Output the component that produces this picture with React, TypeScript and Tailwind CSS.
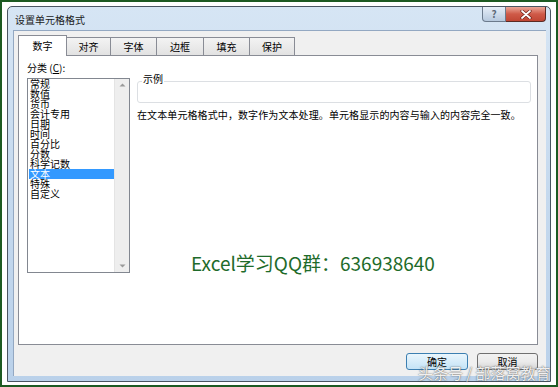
import React from "react";

const font = { fontFamily: '"Noto Sans CJK SC", "Noto Sans", sans-serif' };

const tabs = [
  { label: "数字", w: "w-[49px]", active: true },
  { label: "对齐", w: "w-[45px]" },
  { label: "字体", w: "w-[47px]" },
  { label: "边框", w: "w-[48px]" },
  { label: "填充", w: "w-[47px]" },
  { label: "保护", w: "w-[46px]" },
];

const items = ["常规", "数值", "货币", "会计专用", "日期", "时间", "百分比", "分数", "科学记数", "文本", "特殊", "自定义"];

export default function App() {
  return (
    <div
      className="relative w-[558px] h-[387px] border-2 border-[#1d5a22] bg-white pt-[4px] pl-[5px] overflow-hidden"
      style={font}
    >
      {/* window */}
      <div className="flex flex-col w-[544px] h-[376px] border border-[#4a5562] rounded-t-[5px] bg-gradient-to-b from-[#d6e5f4] via-[#c5d9ee] to-[#bad1ea]">
        {/* title bar */}
        <div className="flex justify-between h-[23px] shrink-0">
          <span className="pl-[7px] pt-[7px] text-[10px] leading-[12px] text-[#1a1a1a]">设置单元格格式</span>
          <div className="flex pr-[4px] items-start">
            <div className="w-[24px] h-[15px] border border-[#6b7a8c] border-t-0 rounded-bl-[4px] bg-gradient-to-b from-[#e6eef8] to-[#b7c9de] flex items-center justify-center">
              <span className="text-[10px] leading-[10px] font-bold text-[#5d6a78]">?</span>
            </div>
            <div className="w-[40px] h-[15px] border border-[#5a2a24] border-t-0 border-l-0 rounded-br-[4px] bg-gradient-to-b from-[#e9a699] via-[#cf5a48] to-[#c04634] flex items-center justify-center">
              <svg width="12" height="9" viewBox="0 0 12 9">
                <path d="M2 1 L10 8 M10 1 L2 8" stroke="#6b2018" strokeWidth="3.2" strokeLinecap="round" />
                <path d="M2 1 L10 8 M10 1 L2 8" stroke="#ffffff" strokeWidth="1.8" strokeLinecap="round" />
              </svg>
            </div>
          </div>
        </div>
        {/* client */}
        <div className="pl-[5px] pr-[4px] pb-[5px]">
          <div className="w-[533px] h-[346px] bg-[#f0f0f0] border-l border-t border-[#93a8c2] flex flex-col pl-[4px] pt-[4px]">
            {/* tabs */}
            <div className="flex items-end h-[20px]">
              {tabs.map((t) =>
                t.active ? (
                  <div
                    key={t.label}
                    className={`${t.w} h-[21px] -mb-px relative z-10 bg-white border border-b-0 border-[#898c95] flex items-center justify-center text-[10px] leading-[12px] text-black`}
                  >
                    {t.label}
                  </div>
                ) : (
                  <div
                    key={t.label}
                    className={`${t.w} h-[18px] -ml-px border border-b-0 border-[#898c95] bg-gradient-to-b from-[#f3f3f3] to-[#e2e2e2] flex items-center justify-center text-[10px] leading-[12px] text-black`}
                  >
                    {t.label}
                  </div>
                )
              )}
            </div>
            {/* panel */}
            <div className="w-[520px] h-[290px] bg-white border border-[#898c95] flex items-start">
              {/* left column */}
              <div className="flex flex-col pl-[8px] pt-[6px]">
                <span className="text-[10px] leading-[12px] text-black">
                  分类 (<span className="underline">C</span>):
                </span>
                <div className="mt-[4px] w-[103px] h-[195px] border border-[#828790] flex">
                  <div className="flex-1 flex flex-col pl-[1px]">
                    {items.map((it) => (
                      <div
                        key={it}
                        className={`h-[10px] text-[10px] leading-[10px] pl-[1px] whitespace-nowrap ${
                          it === "文本" ? "bg-[#3399ff] text-white" : "text-black"
                        }`}
                      >
                        {it}
                      </div>
                    ))}
                  </div>
                  <div className="w-[15px] h-full bg-[#eeeeee] border-l border-[#e4e4e4] flex flex-col items-center justify-between py-[4px]">
                    <svg width="7" height="4" viewBox="0 0 7 4">
                      <path d="M0.5 3.5 L3.5 0.5 L6.5 3.5 Z" fill="#9a9a9a" />
                    </svg>
                    <svg width="7" height="4" viewBox="0 0 7 4">
                      <path d="M0.5 0.5 L3.5 3.5 L6.5 0.5 Z" fill="#9a9a9a" />
                    </svg>
                  </div>
                </div>
              </div>
              {/* right column */}
              <div className="flex flex-col ml-[7px] mt-[25px]">
                <div className="relative w-[394px] h-[22px] border border-[#dcdfe3] rounded-[3px]">
                  <span className="absolute left-[4px] top-[-9px] bg-white px-[1px] text-[10px] leading-[12px] text-black">示例</span>
                </div>
                <p className="mt-[6px] text-[10px] leading-[12px] tracking-[0.1px] text-black whitespace-nowrap">
                  在文本单元格格式中，数字作为文本处理。单元格显示的内容与输入的内容完全一致。
                </p>
                <p className="mt-[130px] ml-[54px] text-[19px] leading-[24px] text-[#1e6b2a] whitespace-nowrap">
                  Excel学习QQ群：636938640
                </p>
              </div>
            </div>
            {/* buttons */}
            <div className="flex justify-end gap-[9px] mt-[8px] pr-[8px]">
              <button className="w-[62px] h-[17px] rounded-[3px] border border-[#3c7fb1] bg-gradient-to-b from-[#eaf6fd] to-[#c4e3f6] text-[10px] leading-[12px] text-black">
                确定
              </button>
              <button className="w-[61px] h-[17px] rounded-[3px] border border-[#707070] bg-gradient-to-b from-[#f2f2f2] via-[#ebebeb] to-[#d6d6d6] text-[10px] leading-[12px] text-black">
                取消
              </button>
            </div>
          </div>
        </div>
      </div>
      {/* watermark */}
      <div
        className="absolute left-[416px] top-[361px] text-[15px] leading-[20px] whitespace-nowrap text-white/90"
        style={{ textShadow: "0 0 1px rgba(60,60,60,0.8), 0 0 2px rgba(60,60,60,0.5)" }}
      >
        头条号 / 部落窝教育
      </div>
    </div>
  );
}
